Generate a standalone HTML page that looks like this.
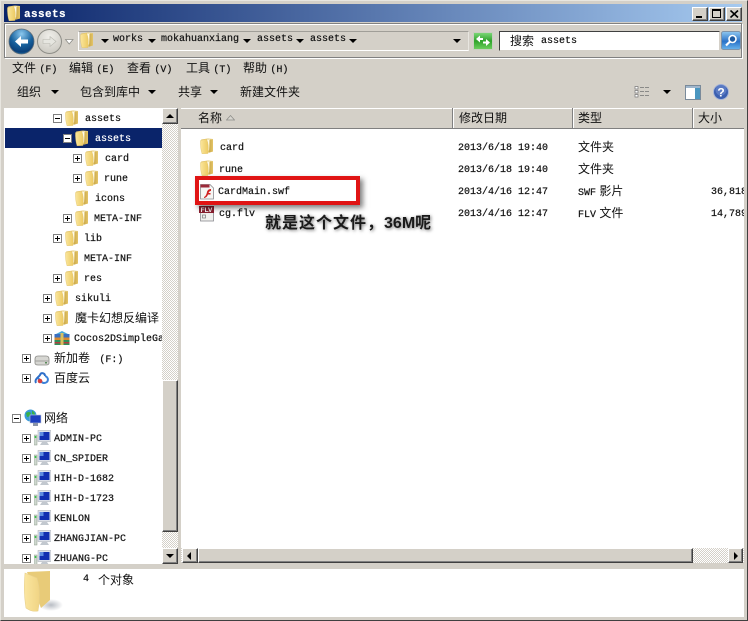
<!DOCTYPE html>
<html><head><meta charset="utf-8"><title>assets</title>
<style>
html,body{margin:0;padding:0}
body{width:748px;height:621px;overflow:hidden;position:relative;background:#d4d0c8;font-family:"Liberation Sans","Noto Sans CJK SC",sans-serif;color:#111}
div,span,svg{position:absolute}
.t{white-space:nowrap;font:12px/20px "Liberation Sans","Noto Sans CJK SC",sans-serif;height:20px}
.m{white-space:nowrap;font:10px/20px "Liberation Mono",monospace;height:20px;margin-top:2px;-webkit-text-stroke:.2px currentColor}
.t i,.m i{position:static;font:10px/20px "Liberation Mono",monospace;-webkit-text-stroke:.2px currentColor}
.ex{width:7px;height:7px;border:1px solid #808080;background:#fff}
.ex:before{content:"";position:absolute;left:1px;top:3px;width:5px;height:1px;background:#000}
.ex.p:after{content:"";position:absolute;left:3px;top:1px;width:1px;height:5px;background:#000}
.btn{background:#d4d0c8;border:1px solid;border-color:#fff #404040 #404040 #fff;box-sizing:border-box;box-shadow:inset -1px -1px 0 #808080}
.dith{background:repeating-conic-gradient(#fff 0 25%,#d4d0c8 0 50%) 0 0/2px 2px}
.ar{width:0;height:0;border-left:4px solid transparent;border-right:4px solid transparent;border-top:4px solid #000}
.sep{top:108px;width:2px;height:20px;background:linear-gradient(90deg,#808080 50%,#fff 50%)}
</style></head><body>
<svg width="0" height="0" style="left:0;top:0"><defs>
<linearGradient id="fg" x1="0" x2="1" y1="0" y2="0"><stop offset="0" stop-color="#fbe69c"/><stop offset="1" stop-color="#ecca62"/></linearGradient>
<linearGradient id="fk" x1="0" x2="1" y1="0" y2="0"><stop offset="0" stop-color="#c9a848"/><stop offset="1" stop-color="#e4c468"/></linearGradient>
<symbol id="folder" viewBox="0 0 14 16"><path d="M1 1.5 L8 0.5 L13 1 L13 13.5 L8 14.5 Z" fill="#e3c873"/><path d="M6 1.5 h4 v11 h-4z" fill="#fffbe8"/><path d="M0.5 2.5 L6.5 1 C8 4 8.8 9 8 15.5 L2 15.8 C0.6 11 0.3 7 0.5 2.5Z" fill="url(#fg)" stroke="#e0c268" stroke-width=".4"/><path d="M9.5 2 h3.5 v11.5 l-4.2 1.2 c.6-4 .6-9 .7-12.7z" fill="url(#fk)"/></symbol>
<symbol id="pc" viewBox="0 0 17 16"><rect x="0" y="5" width="3" height="10" fill="#cfd8cf" stroke="#8a9a8a" stroke-width=".5"/><rect x="0.7" y="6" width="1.6" height="2" fill="#39c24a"/><rect x="4" y="0.5" width="13" height="11" fill="#dfe3ea" stroke="#a0a8b0" stroke-width=".5"/><rect x="5.5" y="2" width="10" height="8" fill="#1230b0"/><rect x="5.5" y="2" width="4" height="4" fill="#5f8ce0"/><path d="M8 12 h5 l2 3 h-9z" fill="#c2c8cf"/></symbol>
</defs></svg>

<!-- window border -->
<div style="left:0;top:0;width:748px;height:621px;box-sizing:border-box;border:1px solid;border-color:#e8e6e0 #404040 #404040 #e8e6e0"></div>

<!-- title bar -->
<div style="left:4px;top:4px;width:738px;height:18px;background:linear-gradient(90deg,#0a246a,#a6caf0)"></div>
<svg style="left:7px;top:5px" width="14" height="16"><use href="#folder" width="14" height="16"/></svg>
<div class="m" style="left:24px;top:3px;color:#fff;font-weight:bold;font-size:11px;letter-spacing:.4px">assets</div>
<div class="btn" style="left:692px;top:7px;width:16px;height:14px"><div style="left:3px;top:8px;width:6px;height:2px;background:#000"></div></div>
<div class="btn" style="left:709px;top:7px;width:16px;height:14px"><div style="left:2px;top:1px;width:9px;height:9px;border:1px solid #000;border-top-width:2px;box-sizing:border-box"></div></div>
<div class="btn" style="left:726px;top:7px;width:16px;height:14px"><svg style="left:3px;top:2px" width="9" height="8"><path d="M0.5 0.5L8 7.5M8 0.5L0.5 7.5" stroke="#000" stroke-width="1.6"/></svg></div>

<!-- address band -->
<div style="left:4px;top:23px;width:738px;height:35px;box-sizing:border-box;border:1px solid #808080;box-shadow:inset 1px 1px 0 #fff,1px 1px 0 #fff"></div>
<svg style="left:8px;top:28px" width="70" height="28">
<defs><radialGradient id="bb" cx=".5" cy=".2" r=".9"><stop offset="0" stop-color="#8cc8ee"/><stop offset=".5" stop-color="#16609c"/><stop offset=".8" stop-color="#0b3f78"/><stop offset="1" stop-color="#23a0e0"/></radialGradient>
<radialGradient id="fb" cx=".5" cy=".3" r=".8"><stop offset="0" stop-color="#f0efea"/><stop offset="1" stop-color="#c6c4bc"/></radialGradient></defs>
<circle cx="13.5" cy="13.5" r="12.5" fill="url(#bb)" stroke="#5f6d78" stroke-width=".8"/>
<path d="M7 13.5 L13 8 V11.5 H20 V15.5 H13 V19Z" fill="#fff"/>
<circle cx="41.5" cy="13.5" r="12" fill="url(#fb)" stroke="#8e8e88"/>
<path d="M48 13.5 L42 8.5 V11.5 H35 V15.5 H42 V18.5Z" fill="#e6e6e0" stroke="#b8b8b0" stroke-width=".6"/>
<path d="M57.5 11.5 L65 11.5 L61.2 16Z" fill="#fff" stroke="#8e8e88" stroke-width=".8"/>
</svg>
<div style="left:78px;top:31px;width:391px;height:20px;box-sizing:border-box;border:1px solid;border-color:#a09e98 #e8e6e0 #fff #fff"></div>
<svg style="left:80px;top:32px" width="14" height="16"><use href="#folder" width="14" height="16"/></svg>
<div class="ar" style="left:101px;top:39px"></div>
<div class="m" style="left:113px;top:28px">works</div>
<div class="ar" style="left:148px;top:39px"></div>
<div class="m" style="left:161px;top:28px">mokahuanxiang</div>
<div class="ar" style="left:243px;top:39px"></div>
<div class="m" style="left:257px;top:28px">assets</div>
<div class="ar" style="left:296px;top:39px"></div>
<div class="m" style="left:310px;top:28px">assets</div>
<div class="ar" style="left:349px;top:39px"></div>
<div class="ar" style="left:453px;top:39px"></div>
<svg style="left:473px;top:32px" width="20" height="18">
<defs><linearGradient id="gr" x1="0" x2="0" y1="0" y2="1"><stop offset="0" stop-color="#7fd87a"/><stop offset=".5" stop-color="#2fa32b"/><stop offset="1" stop-color="#6fd060"/></linearGradient></defs>
<rect x=".5" y=".5" width="19" height="17" fill="url(#gr)" stroke="#c8d0c0"/>
<path d="M3 7 L7 3.5 V6 H10 V8 H7 V10.5Z M17 10.5 L13 14 V11.5 H10 V9.5 H13 V7Z" fill="#fff"/>
</svg>
<div style="left:499px;top:31px;width:221px;height:20px;box-sizing:border-box;background:#fff;border:1px solid;border-color:#404040 #d4d0c8 #d4d0c8 #404040"></div>
<div class="t" style="left:510px;top:31px">搜索</div>
<div class="m" style="left:541px;top:30px">assets</div>
<svg style="left:721px;top:31px" width="20" height="19">
<defs><linearGradient id="sb" x1="0" x2="0" y1="0" y2="1"><stop offset="0" stop-color="#8fc8f0"/><stop offset=".55" stop-color="#2a72c8"/><stop offset="1" stop-color="#6ab4ec"/></linearGradient></defs>
<rect x=".5" y=".5" width="19" height="18" rx="2" fill="url(#sb)" stroke="#7f93a8"/>
<circle cx="11.5" cy="8" r="3.5" fill="#1d5aa0" stroke="#fff" stroke-width="1.6"/>
<path d="M9 10.5 L5 14.5" stroke="#fff" stroke-width="2.2"/>
</svg>

<!-- menu -->
<div class="t" style="left:12px;top:58px">文件 <i>(F)</i></div>
<div class="t" style="left:69px;top:58px">编辑 <i>(E)</i></div>
<div class="t" style="left:127px;top:58px">查看 <i>(V)</i></div>
<div class="t" style="left:186px;top:58px">工具 <i>(T)</i></div>
<div class="t" style="left:243px;top:58px">帮助 <i>(H)</i></div>

<!-- toolbar -->
<div class="t" style="left:17px;top:82px">组织</div>
<div class="ar" style="left:51px;top:90px"></div>
<div class="t" style="left:80px;top:82px">包含到库中</div>
<div class="ar" style="left:148px;top:90px"></div>
<div class="t" style="left:178px;top:82px">共享</div>
<div class="ar" style="left:210px;top:90px"></div>
<div class="t" style="left:240px;top:82px">新建文件夹</div>
<svg style="left:634px;top:85px" width="16" height="13">
<path d="M1 1.5h3v2.5h-3zM1 5.5h3v2.5h-3zM1 9.5h3v2.5h-3z" fill="#fff" stroke="#777" stroke-width=".7"/>
<path d="M6 2.5h9M6 6.5h9M6 10.5h9" stroke="#8a8a88" stroke-width="1.1" stroke-dasharray="4 1"/>
</svg>
<div class="ar" style="left:663px;top:90px"></div>
<svg style="left:685px;top:85px" width="16" height="15"><rect x=".5" y=".5" width="15" height="14" fill="#fff" stroke="#7a8a9a"/><rect x="1" y="1" width="14" height="2" fill="#9fb6cc"/><rect x="10" y="3" width="5" height="11" fill="#4a96c0"/></svg>
<svg style="left:713px;top:84px" width="16" height="16"><circle cx="8" cy="8" r="7.5" fill="#3a5fb0" stroke="#a6b4d8"/><circle cx="8" cy="6" r="5.5" fill="#6f8cd0" opacity=".6"/><text x="8" y="12.5" text-anchor="middle" font-family="Liberation Sans" font-weight="bold" font-size="12" fill="#fff">?</text></svg>

<!-- nav pane -->
<div style="left:4px;top:108px;width:158px;height:456px;background:#fff;overflow:hidden">
<div style="left:1px;top:20px;width:157px;height:20px;background:#0a246a"></div>
</div>
<div id="tree" style="left:0;top:0;width:162px;height:564px;overflow:hidden">
<div class="ex" style="left:53px;top:114px"></div><svg style="left:65px;top:110px" width="14" height="16"><use href="#folder" width="14" height="16"/></svg><div class="m" style="left:85px;top:108px">assets</div>
<div class="ex" style="left:63px;top:134px"></div><svg style="left:75px;top:130px" width="14" height="16"><use href="#folder" width="14" height="16"/></svg><div class="m" style="left:95px;top:128px;color:#fff">assets</div>
<div class="ex p" style="left:73px;top:154px"></div><svg style="left:85px;top:150px" width="14" height="16"><use href="#folder" width="14" height="16"/></svg><div class="m" style="left:105px;top:148px">card</div>
<div class="ex p" style="left:73px;top:174px"></div><svg style="left:85px;top:170px" width="14" height="16"><use href="#folder" width="14" height="16"/></svg><div class="m" style="left:104px;top:168px">rune</div>
<svg style="left:75px;top:190px" width="14" height="16"><use href="#folder" width="14" height="16"/></svg><div class="m" style="left:95px;top:188px">icons</div>
<div class="ex p" style="left:63px;top:214px"></div><svg style="left:75px;top:210px" width="14" height="16"><use href="#folder" width="14" height="16"/></svg><div class="m" style="left:94px;top:208px">META-INF</div>
<div class="ex p" style="left:53px;top:234px"></div><svg style="left:65px;top:230px" width="14" height="16"><use href="#folder" width="14" height="16"/></svg><div class="m" style="left:84px;top:228px">lib</div>
<svg style="left:65px;top:250px" width="14" height="16"><use href="#folder" width="14" height="16"/></svg><div class="m" style="left:84px;top:248px">META-INF</div>
<div class="ex p" style="left:53px;top:274px"></div><svg style="left:65px;top:270px" width="14" height="16"><use href="#folder" width="14" height="16"/></svg><div class="m" style="left:84px;top:268px">res</div>
<div class="ex p" style="left:43px;top:294px"></div><svg style="left:55px;top:290px" width="14" height="16"><use href="#folder" width="14" height="16"/></svg><div class="m" style="left:75px;top:288px">sikuli</div>
<div class="ex p" style="left:43px;top:314px"></div><svg style="left:55px;top:310px" width="14" height="16"><use href="#folder" width="14" height="16"/></svg><div class="t" style="left:75px;top:308px">魔卡幻想反编译</div>
<div class="ex p" style="left:43px;top:334px"></div>
<svg style="left:54px;top:330px" width="16" height="16"><rect x="0.5" y="4" width="15" height="11" fill="#2f8f5a"/><rect x="0.5" y="4" width="15" height="3.5" fill="#3a6fc0"/><rect x="0.5" y="7.5" width="15" height="2.5" fill="#d88a30"/><rect x="0.5" y="12" width="15" height="1.5" fill="#b04040"/><path d="M2 4 L8 1 L14 4Z" fill="#48a8d8"/><rect x="6.5" y="3" width="3" height="12" fill="#d8c060"/></svg>
<div class="m" style="left:74px;top:328px">Cocos2DSimpleGame</div>
<div class="ex p" style="left:22px;top:354px"></div>
<svg style="left:34px;top:352px" width="16" height="14"><path d="M1 7 Q1 4 4 4 H12 Q15 4 15 7 V11 Q15 13 12 13 H4 Q1 13 1 11Z" fill="#d6d6d2" stroke="#8a8a86" stroke-width=".8"/><path d="M1 9 H15" stroke="#a0a09c"/><rect x="11" y="10" width="2" height="1.5" fill="#5a8a5a"/></svg>
<div class="t" style="left:54px;top:348px">新加卷 <i>&nbsp;(F:)</i></div>
<div class="ex p" style="left:22px;top:374px"></div>
<svg style="left:34px;top:370px" width="16" height="16"><path d="M2 13 C0 9 5 7 6 5 C7 2 11 3 11 6" fill="none" stroke="#2f6fc8" stroke-width="2"/><path d="M11 6 C15 7 15 13 10 13 C7 13 6 10 4 8" fill="none" stroke="#3a80d8" stroke-width="2"/><circle cx="6" cy="11" r="2.3" fill="#d84040"/></svg>
<div class="t" style="left:54px;top:368px">百度云</div>
<div class="ex" style="left:12px;top:414px"></div>
<svg style="left:24px;top:409px" width="18" height="18"><circle cx="6.5" cy="6.5" r="6" fill="#3a9ad8"/><path d="M2 4 Q5 2 7 4 Q6 8 3 8Z M8 1.5 Q11 3 11 6 L8 5Z" fill="#38b048"/><rect x="6" y="6" width="11" height="8" fill="#1d3fc0" stroke="#c0c8d8" stroke-width=".6"/><rect x="9" y="14" width="5" height="3" fill="#8a94a8"/></svg>
<div class="t" style="left:44px;top:408px">网络</div>
<div class="ex p" style="left:22px;top:434px"></div><svg style="left:34px;top:430px" width="17" height="16"><use href="#pc" width="17" height="16"/></svg><div class="m" style="left:54px;top:428px">ADMIN-PC</div>
<div class="ex p" style="left:22px;top:454px"></div><svg style="left:34px;top:450px" width="17" height="16"><use href="#pc" width="17" height="16"/></svg><div class="m" style="left:54px;top:448px">CN_SPIDER</div>
<div class="ex p" style="left:22px;top:474px"></div><svg style="left:34px;top:470px" width="17" height="16"><use href="#pc" width="17" height="16"/></svg><div class="m" style="left:54px;top:468px">HIH-D-1682</div>
<div class="ex p" style="left:22px;top:494px"></div><svg style="left:34px;top:490px" width="17" height="16"><use href="#pc" width="17" height="16"/></svg><div class="m" style="left:54px;top:488px">HIH-D-1723</div>
<div class="ex p" style="left:22px;top:514px"></div><svg style="left:34px;top:510px" width="17" height="16"><use href="#pc" width="17" height="16"/></svg><div class="m" style="left:54px;top:508px">KENLON</div>
<div class="ex p" style="left:22px;top:534px"></div><svg style="left:34px;top:530px" width="17" height="16"><use href="#pc" width="17" height="16"/></svg><div class="m" style="left:54px;top:528px">ZHANGJIAN-PC</div>
<div class="ex p" style="left:22px;top:554px"></div><svg style="left:34px;top:550px" width="17" height="16"><use href="#pc" width="17" height="16"/></svg><div class="m" style="left:54px;top:548px">ZHUANG-PC</div>
</div>

<!-- vertical scrollbar -->
<div class="dith" style="left:162px;top:108px;width:16px;height:456px"></div>
<div class="btn" style="left:162px;top:108px;width:16px;height:16px"><div class="ar" style="left:3px;top:5px;border-top:0;border-bottom:4px solid #000"></div></div>
<div class="btn" style="left:162px;top:380px;width:16px;height:152px"></div>
<div class="btn" style="left:162px;top:548px;width:16px;height:16px"><div class="ar" style="left:3px;top:5px"></div></div>

<!-- list area -->
<div style="left:181px;top:108px;width:563px;height:440px;background:#fff;overflow:hidden"></div>
<div style="left:181px;top:108px;width:563px;height:21px;background:#d4d0c8;border-top:1px solid #fff;border-bottom:1px solid #808080;box-sizing:border-box"></div>
<div class="sep" style="left:452px"></div><div class="sep" style="left:572px"></div><div class="sep" style="left:692px"></div>
<div class="t" style="left:198px;top:108px">名称</div>
<svg style="left:226px;top:115px" width="9" height="6"><path d="M4.5 .5L8.5 5H.5Z" fill="#d8d6d0" stroke="#8a8a86" stroke-width=".7"/></svg>
<div class="t" style="left:459px;top:108px">修改日期</div>
<div class="t" style="left:578px;top:108px">类型</div>
<div class="t" style="left:698px;top:108px">大小</div>

<svg style="left:200px;top:138px" width="14" height="16"><use href="#folder" width="14" height="16"/></svg>
<div class="m" style="left:220px;top:137px">card</div>
<svg style="left:200px;top:160px" width="14" height="16"><use href="#folder" width="14" height="16"/></svg>
<div class="m" style="left:219px;top:159px">rune</div>
<svg style="left:199px;top:183px" width="16" height="17"><path d="M1.5 1.5H11L14.5 5V16H1.5Z" fill="#f6f6f4" stroke="#8a8a90" stroke-width=".8"/><rect x="1.5" y="1.5" width="9" height="3" fill="#9c2a3a"/><path d="M5 14 C7 13 7.5 11 8 9 C8.5 7 10 6 12 6 V8 C10.5 8 10 9 9.5 10 H11.5 V11.5 H9 C8.5 13 7 15 5 15Z" fill="#d02020"/></svg>
<div class="m" style="left:218px;top:181px">CardMain.swf</div>
<svg style="left:199px;top:206px" width="16" height="16"><rect x="1.5" y="5" width="13" height="10" fill="#f0f0ee" stroke="#8a8a90" stroke-width=".8"/><rect x="0" y="0" width="15" height="7" fill="#8a2030"/><text x="7.5" y="6" text-anchor="middle" font-family="Liberation Sans" font-weight="bold" font-size="6.5" fill="#fff">FLV</text><rect x="3.5" y="9" width="3" height="3" fill="none" stroke="#777" stroke-width=".7"/></svg>
<div class="m" style="left:219px;top:203px">cg.flv</div>

<div class="m" style="left:458px;top:137px">2013/6/18 19:40</div>
<div class="m" style="left:458px;top:159px">2013/6/18 19:40</div>
<div class="m" style="left:458px;top:181px">2013/4/16 12:47</div>
<div class="m" style="left:458px;top:203px">2013/4/16 12:47</div>
<div class="t" style="left:578px;top:137px">文件夹</div>
<div class="t" style="left:578px;top:159px">文件夹</div>
<div class="t" style="left:578px;top:181px"><i>SWF</i> 影片</div>
<div class="t" style="left:578px;top:203px"><i>FLV</i> 文件</div>
<div style="left:700px;top:130px;width:44px;height:100px;overflow:hidden">
<div class="m" style="left:11px;top:51px">36,818 KB</div>
<div class="m" style="left:11px;top:73px">14,789 KB</div>
</div>

<!-- annotation -->
<div style="left:195px;top:176px;width:165px;height:29px;box-sizing:border-box;border:4px solid #e01414;box-shadow:3px 3px 5px rgba(0,0,0,.5)"></div>
<div style="left:265px;top:214px;height:20px;white-space:nowrap;font:bold 16px/20px 'Liberation Sans','Noto Sans CJK SC',sans-serif;color:#1a1a1a;text-shadow:1px 1px 3px rgba(0,0,0,.55)"><span style="position:static;letter-spacing:1px">就是这个文件，</span>36M呢</div>

<!-- horizontal scrollbar -->
<div class="dith" style="left:181px;top:548px;width:563px;height:15px"></div>
<div class="btn" style="left:182px;top:548px;width:16px;height:15px"><div class="ar" style="left:4px;top:3px;border:0;border-top:4px solid transparent;border-bottom:4px solid transparent;border-right:4px solid #000"></div></div>
<div class="btn" style="left:198px;top:548px;width:495px;height:15px"></div>
<div class="btn" style="left:728px;top:548px;width:15px;height:15px"><div class="ar" style="left:5px;top:3px;border:0;border-top:4px solid transparent;border-bottom:4px solid transparent;border-left:4px solid #000"></div></div>

<!-- status bar -->
<div style="left:4px;top:569px;width:740px;height:48px;background:#fff"></div>
<svg style="left:24px;top:570px" width="40" height="43">
<defs><linearGradient id="sf" x1="0" x2="1" y1="0" y2="0"><stop offset="0" stop-color="#fbe6a0"/><stop offset="1" stop-color="#f0d484"/></linearGradient>
<radialGradient id="ss"><stop offset="0" stop-color="#9aa0aa" stop-opacity=".7"/><stop offset="1" stop-color="#9aa0aa" stop-opacity="0"/></radialGradient></defs>
<ellipse cx="27" cy="35" rx="12" ry="6" fill="url(#ss)"/>
<path d="M3 2 L26 1 L26 30 L17 38 Z" fill="#e8cb78"/>
<path d="M1 3 L13 8 C16 18 16 30 14 41 C8 42 5 40 2 38 C0 26 0 14 1 3Z" fill="url(#sf)" stroke="#e8d08c" stroke-width=".6"/>
</svg>
<div class="m" style="left:83px;top:568px">4</div>
<div class="t" style="left:98px;top:570px">个对象</div>
</body></html>
